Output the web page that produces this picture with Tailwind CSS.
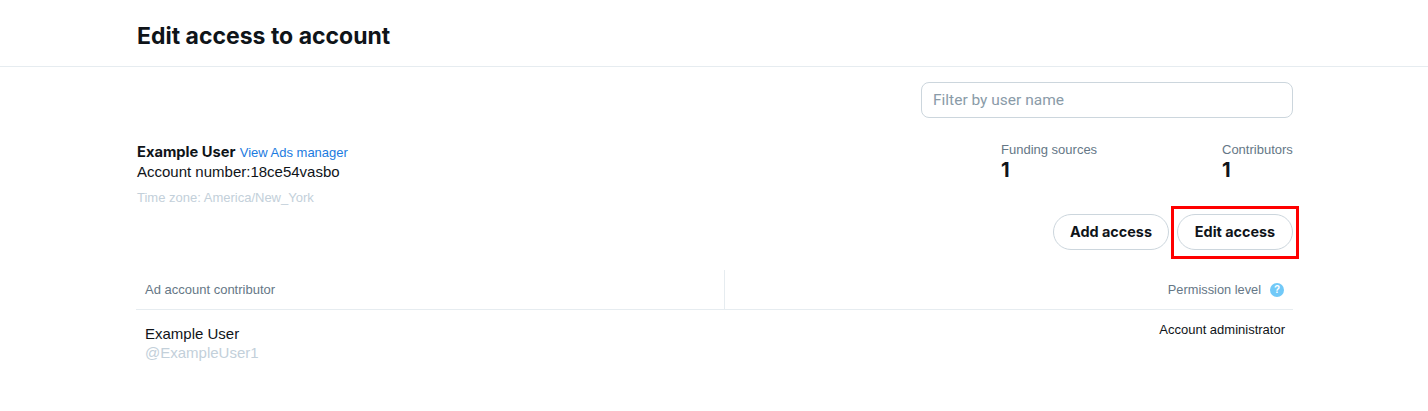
<!DOCTYPE html>
<html lang="en">
<head>
    <meta charset="UTF-8">
    <title>Edit access to account</title>
    <script src="https://cdn.jsdelivr.net/npm/@tailwindcss/browser@4"></script>
</head>
<body class="bg-white text-[#0f1419] font-['Liberation_Sans',sans-serif] h-[411px] overflow-hidden">
    <header class="h-[67px] border-b border-[#e6ecf0] pl-[137px] flex items-center">
        <h1 class="font-['Inter',sans-serif] font-bold text-[23px] leading-[28px] mt-[5px]">Edit access to account</h1>
    </header>

    <main class="w-[1157px] ml-[136px]">
        <div class="flex justify-end pt-[15px]">
            <input type="text" placeholder="Filter by user name" class="w-[372px] h-[36px] border border-[#ccd6dd] rounded-lg px-[11px] font-['Roboto',sans-serif] text-[15.5px] placeholder:text-[#8a9ba8] outline-none">
        </div>

        <section class="flex justify-between pt-[24px]">
            <div class="pl-[1px]">
                <div class="text-[15px] leading-[20px]">
                    <span class="font-['Inter',sans-serif] font-bold text-[14.7px]">Example User</span>
                    <a href="#" class="text-[#1b7be0] text-[13px]">View Ads manager</a>
                </div>
                <div class="text-[15px] leading-[20px] mt-[-1px]">Account number:18ce54vasbo</div>
                <div class="text-[13px] leading-[16px] mt-[8px] text-[#c3d0da]">Time zone: America/New_York</div>
            </div>
            <div class="flex">
                <div class="w-[221px]">
                    <div class="text-[13px] leading-[16px] text-[#657786]">Funding sources</div>
                    <div class="font-['Inter',sans-serif] font-bold text-[20px] leading-[24px]">1</div>
                </div>
                <div class="w-[71px]">
                    <div class="text-[13px] leading-[16px] text-[#657786]">Contributors</div>
                    <div class="font-['Inter',sans-serif] font-bold text-[20px] leading-[24px]">1</div>
                </div>
            </div>
        </section>

        <div class="flex justify-end gap-[8px] mt-[8px]">
            <button class="h-[36px] w-[116px] border border-[#ccd6dd] rounded-full font-['Inter',sans-serif] font-bold text-[14.4px]">Add access</button>
            <div class="relative">
                <button class="h-[36px] w-[116px] border border-[#ccd6dd] rounded-full font-['Inter',sans-serif] font-bold text-[14.4px]">Edit access</button>
                <div class="absolute left-[-6px] top-[-8px] w-[128px] h-[53px] border-[3px] border-[#ff0000]"></div>
            </div>
        </div>

        <div class="flex h-[40px] mt-[20px] border-b border-[#e6ecf0] text-[13px] text-[#657786]">
            <div class="w-[589px] border-r border-[#e6ecf0] pl-[9px] flex items-center">Ad account contributor</div>
            <div class="flex-1 pr-[9px] flex items-center justify-end gap-[9px] text-[12.8px]">
                Permission level
                <span class="w-[14px] h-[14px] rounded-full bg-[#71c9f8] text-white text-[10px] font-bold flex items-center justify-center">?</span>
            </div>
        </div>

        <div class="flex justify-between pl-[9px] pr-2">
            <div class="pt-[14px]">
                <div class="text-[15px] leading-[20px]">Example User</div>
                <div class="text-[15px] leading-[18px] text-[#c3d0da]">@ExampleUser1</div>
            </div>
            <div class="text-[13px] leading-[16px] pt-[12px]">Account administrator</div>
        </div>
    </main>
</body>
</html>
